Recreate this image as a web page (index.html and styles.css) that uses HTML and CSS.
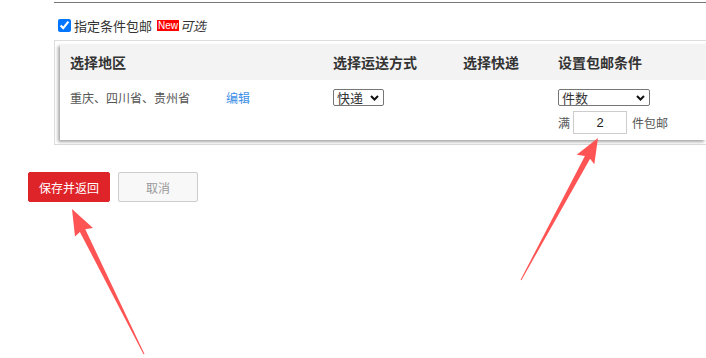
FILE: index.html
```html
<!DOCTYPE html>
<html lang="zh-CN">
<head>
    <meta charset="UTF-8">
    <title>包邮条件</title>
    <link rel="stylesheet" href="styles.css">
</head>
<body>
    <div class="topline"></div>

    <label class="free-option">
        <input type="checkbox" checked>
        <span>指定条件包邮</span>
        <em class="badge">New</em>
        <i class="optional">可选</i>
    </label>

    <div class="rule-box">
        <div class="rule-table">
            <div class="row head">
                <div class="cell span2">选择地区</div>
                <div class="cell">选择运送方式</div>
                <div class="cell">选择快递</div>
                <div class="cell">设置包邮条件</div>
            </div>
            <div class="row body">
                <div class="cell">重庆、四川省、贵州省</div>
                <div class="cell"><a href="#" class="edit">编辑</a></div>
                <div class="cell">
                    <span class="sel-wrap sel-ship">
                        <select class="sel">
                            <option>快递</option>
                        </select>
                        <svg class="chev" width="9" height="6" viewBox="0 0 9 6"><path d="M1 1l3.5 3.5L8 1" /></svg>
                    </span>
                </div>
                <div class="cell"></div>
                <div class="cell">
                    <span class="sel-wrap sel-cond">
                        <select class="sel">
                            <option>件数</option>
                        </select>
                        <svg class="chev" width="9" height="6" viewBox="0 0 9 6"><path d="M1 1l3.5 3.5L8 1" /></svg>
                    </span>
                    <div class="cond">
                        <span>满</span>
                        <input type="text" class="num" value="2">
                        <span>件包邮</span>
                    </div>
                </div>
            </div>
        </div>
    </div>

    <div class="actions">
        <button class="btn btn-save">保存并返回</button>
        <button class="btn btn-cancel">取消</button>
    </div>

    <!-- annotation arrows -->
    <svg class="arrows" width="706" height="358" viewBox="0 0 706 358">
        <polygon points="72,209 93,228 85.3,229.3 144.5,354 143.5,354.2 79.9,231.9 75,236.4" />
        <polygon points="598,138 594.3,164.3 590.1,158.7 521.4,280.2 520.6,279.8 584.9,155.9 576.7,154.7" />
    </svg>
</body>
</html>
```

FILE: styles.css
```css
body {
    margin: 0;
    padding-top: 2px;
    width: 706px;
    height: 358px;
    overflow: hidden;
    position: relative;
    background: #fff;
    font-family: "Noto Sans CJK SC", "Liberation Sans", sans-serif;
    color: #333;
}

.topline {
    margin-left: 54px;
    border-top: 1px solid #777;
}

.free-option {
    display: flex;
    align-items: center;
    margin: 16px 0 0 58px;
    height: 13px;
    font-size: 13px;
    white-space: nowrap;
}

.free-option input {
    width: 13px;
    height: 13px;
    margin: 0 3px 0 0;
}

.badge {
    font-style: normal;
    font-family: "Liberation Sans", sans-serif;
    font-size: 10px;
    line-height: 11px;
    background: #f00;
    color: #fff;
    padding: 0 1px;
    margin-left: 5px;
}

.optional {
    font-style: italic;
    margin-left: 1px;
}

.rule-box {
    margin: 8px 0 0 54px;
    width: 646px;
    border: 1px solid #ddd;
    border-right: none;
    padding: 3px 0 4px 5px;
}

.rule-table {
    box-shadow: -2px 2px 3px rgba(0, 0, 0, 0.35);
    background: #fff;
}

.row {
    display: grid;
    grid-template-columns: 156px 107px 130px 95px 1fr;
}

.row.head {
    height: 36px;
    align-items: center;
    background: #f3f3f3;
    font-size: 14px;
    font-weight: bold;
    color: #333;
}

.span2 {
    grid-column: span 2;
}

.cell {
    padding-left: 10px;
    white-space: nowrap;
}

.row.body {
    padding: 9px 0 6px;
    font-size: 12px;
    line-height: 17px;
    color: #555;
}

.edit {
    color: #3a8ee6;
    text-decoration: none;
    font-size: 12px;
}

.sel-wrap {
    display: block;
    position: relative;
    height: 17px;
}

.sel-ship {
    width: 51px;
}

.sel-cond {
    width: 92px;
}

.sel {
    appearance: none;
    -webkit-appearance: none;
    display: block;
    box-sizing: border-box;
    width: 100%;
    height: 17px;
    margin: 0;
    padding: 0 0 0 3px;
    font-family: inherit;
    font-size: 13px;
    line-height: 15px;
    color: #333;
    border: 1px solid #767676;
    border-radius: 2px;
    background: #fff;
}

.chev {
    position: absolute;
    right: 5px;
    top: 6px;
    fill: none;
    stroke: #111;
    stroke-width: 2;
}

.cond {
    display: flex;
    align-items: center;
    margin-top: 5px;
    height: 23px;
    white-space: nowrap;
}

.num {
    box-sizing: border-box;
    width: 54px;
    height: 23px;
    margin: 0 5px 0 3px;
    border: 1px solid #ccc;
    text-align: center;
    font-family: "Liberation Sans", sans-serif;
    font-size: 13px;
    color: #222;
    padding: 0;
}

.actions {
    display: flex;
    gap: 8px;
    margin: 27px 0 0 28px;
}

.btn {
    height: 30px;
    border-radius: 2px;
    font-family: inherit;
    font-size: 12px;
    padding: 0;
}

.btn-save {
    width: 82px;
    background: #df2429;
    border: 1px solid #df2429;
    color: #fff;
}

.btn-cancel {
    width: 80px;
    background: #f8f8f8;
    border: 1px solid #ccc;
    color: #999;
}

.arrows {
    position: absolute;
    left: 0;
    top: 0;
    fill: #ff5454;
}
```
